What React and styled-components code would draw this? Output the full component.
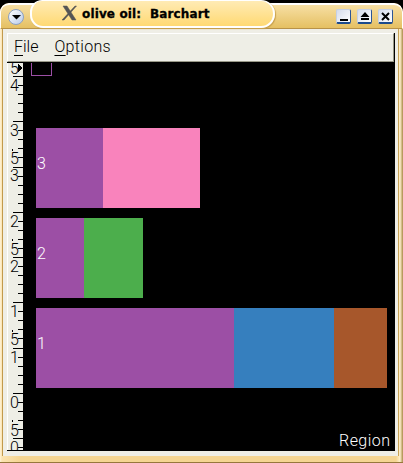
import React from 'react';
import styled, { createGlobalStyle } from 'styled-components';

const Global = createGlobalStyle`
  * { box-sizing: border-box; }
  body { margin: 0; background: #000; }
`;

const Frame = styled.div`
  position: relative;
  display: flex;
  flex-direction: column;
  width: 403px;
  height: 463px;
  background: #000;
  padding-top: 3px;
`;

const WindowBox = styled.div`
  display: flex;
  flex-direction: column;
  flex: 1;
  border-radius: 9px 9px 0 0;
  background: linear-gradient(90deg, #fff3d6 0, #fbe3b0 2px, #f5d592 20px, #f5d592 396px, #fff0cc 400px, #a98a48 403px);
  border-bottom: 1px solid #96783c;
  overflow: hidden;
`;

const TitleBar = styled.div`
  display: flex;
  align-items: center;
  justify-content: space-between;
  height: 26px;
  flex: none;
  padding: 0 10px 0 8px;
  border-top: 2px solid #fff;
  border-left: 1px solid #fff;
  border-right: 1px solid #fff;
  border-bottom: 1px solid #b89248;
  border-radius: 9px 9px 0 0;
  background: linear-gradient(#f7dfa4, #e5c062);
`;

const Tab = styled.div`
  position: absolute;
  left: 30px;
  top: 0;
  width: 245px;
  height: 28px;
  display: flex;
  align-items: center;
  padding: 0 0 1px 29px;
  border: 2px solid #fff;
  border-top-width: 1px;
  border-radius: 12px 14px 14px 13px;
  background: linear-gradient(#ffebb5, #ffd973);
  box-shadow: 1px 1px 1px #c8a04c;
`;

const Title = styled.span`
  margin-left: 3px;
  padding-top: 1px;
  white-space: pre;
  font: bold 12px/16px "DejaVu Sans", sans-serif;
  letter-spacing: 0.14px;
  color: #000;
  -webkit-text-stroke: 0.3px #000;
`;

const MenuButton = styled.div`
  width: 16px;
  height: 16px;
  margin-left: -1px;
  border-radius: 50%;
  background: linear-gradient(135deg, #fff, #b9cbe9);
  border: 1px solid #8ba0c4;
  display: flex;
`;

const Buttons = styled.div`
  display: flex;
  gap: 6px;
  margin-right: -1px;
`;

const Button = styled.div`
  width: 15px;
  height: 15px;
  display: flex;
  background: linear-gradient(135deg, #d5dcec, #fff);
  border: 1px solid #c5d0e6;
  border-right-color: #2c5596;
  border-bottom: 2px solid #1c4a8c;
  border-radius: 2px;
`;

const Body = styled.div`
  flex: 1;
  display: flex;
  flex-direction: column;
  margin: 0 4px 6px 2px;
  padding: 4px 3px 5px 4px;
  border-left: 1px solid #c29a4c;
  border-right: 1px solid #c8a458;
  background: #efeee6;
`;

const MenuBar = styled.div`
  display: flex;
  gap: 16px;
  height: 29px;
  flex: none;
  margin-right: 1px;
  padding: 3px 6px 0;
  border: 1px solid #fff;
  border-right-color: #999988;
  border-bottom: 1px solid #999988;
  background: #eeeee6;
  box-shadow: 1px 0 #000;
`;

const MenuItem = styled.span`
  font: 300 16px/19px Roboto, "Liberation Sans", sans-serif;
  letter-spacing: ${(p) => p.$tracking || 0}px;
  color: #000;
`;

const Mnemonic = styled.span`
  text-decoration: underline;
  text-underline-offset: 3px;
  text-decoration-thickness: 1px;
`;

const Plot = styled.div`
  display: flex;
  height: 389px;
  flex: none;
  background: #000;
`;

const Chart = styled.svg`
  display: block;
  shape-rendering: crispEdges;
`;

const Label = styled.text`
  font: 300 16px Roboto, "Liberation Sans", sans-serif;
  fill: ${(p) => p.$color};
`;

const bars = [
  { name: '3', y: 128, parts: [[36, 67, '#9c4fa5'], [103, 97, '#f983bc']] },
  { name: '2', y: 218, parts: [[36, 48, '#9c4fa5'], [84, 59, '#4cae4c']] },
  { name: '1', y: 308, parts: [[36, 198, '#9c4fa5'], [234, 100, '#367fbe'], [334, 53, '#a7572b']] },
];

const ticks = Array.from({ length: 42 }, (_, i) => ({
  y: Math.round(76 + i * 9.05),
  major: i % 5 === 0,
}));

const digits = [
  ['5', 74], ['4', 91], ['3', 136], ['5', 164], ['3', 181], ['2', 227], ['5', 255],
  ['2', 272], ['1', 317], ['5', 345], ['1', 363], ['0', 408], ['5', 436], ['0', 453],
];

const points = [149, 239, 330, 420];

export default function App() {
  return (
    <Frame>
      <Global />
      <WindowBox>
        <TitleBar>
          <MenuButton><svg width="14" height="14"><path d="M3 5h9L7.500 9.500z" /></svg></MenuButton>
          <Buttons>
            <Button><svg width="13" height="12"><path d="M3 9h8v2H3z" /></svg></Button>
            <Button><svg width="13" height="12"><path d="M7 2l4.500 5h-9zM3 8h8v2H3z" /></svg></Button>
            <Button><svg width="13" height="12"><path d="M3 3l7 7M10 3l-7 7" stroke="#000" strokeWidth="2" /></svg></Button>
          </Buttons>
        </TitleBar>
        <Body>
          <MenuBar>
            <MenuItem><Mnemonic>F</Mnemonic>ile</MenuItem>
            <MenuItem $tracking={0.3}><Mnemonic>O</Mnemonic>ptions</MenuItem>
          </MenuBar>
          <Plot>
            <Chart width="388" height="389" viewBox="7 62 388 389">
              <rect x="7" y="63" width="16" height="387" fill="#eeeee6" />
              <rect x="7" y="63" width="1" height="387" fill="#fff" />
              {ticks.map((t) => (
                <rect key={t.y} x={t.major ? 13 : 18} y={t.y} width={t.major ? 10 : 5} height="1" />
              ))}
              <path d="M18 64v8l5-4z" />
              {digits.map(([d, y]) => (
                <Label key={y} x="10" y={y} $color="#000">{d}</Label>
              ))}
              {points.map((y) => <rect key={y} x="12" y={y} width="1" height="2" />)}
              <rect x="7" y="450" width="17" height="1" />
              <g fill="#9c4fa5">
                <rect x="31" y="63" width="1" height="13" />
                <rect x="51" y="63" width="1" height="13" />
                <rect x="31" y="75" width="21" height="1" />
              </g>
              {bars.map((b) => (
                <g key={b.name}>
                  {b.parts.map(([x, w, c]) => <rect key={x} x={x} y={b.y} width={w} height="80" fill={c} />)}
                  <Label x="37" y={b.y + 41} $color="#fff">{b.name}</Label>
                </g>
              ))}
              <Label x="339" y="446" textLength="51" $color="#fff">Region</Label>
            </Chart>
          </Plot>
        </Body>
      </WindowBox>
      <Tab>
        <svg width="18" height="18"><path d="M2 2h4l9 14h-4zM14 2h1.500L3 16H1z" fill="#555" stroke="#555" strokeWidth="0.500" /></svg>
        <Title>olive oil:  Barchart</Title>
      </Tab>
    </Frame>
  );
}
